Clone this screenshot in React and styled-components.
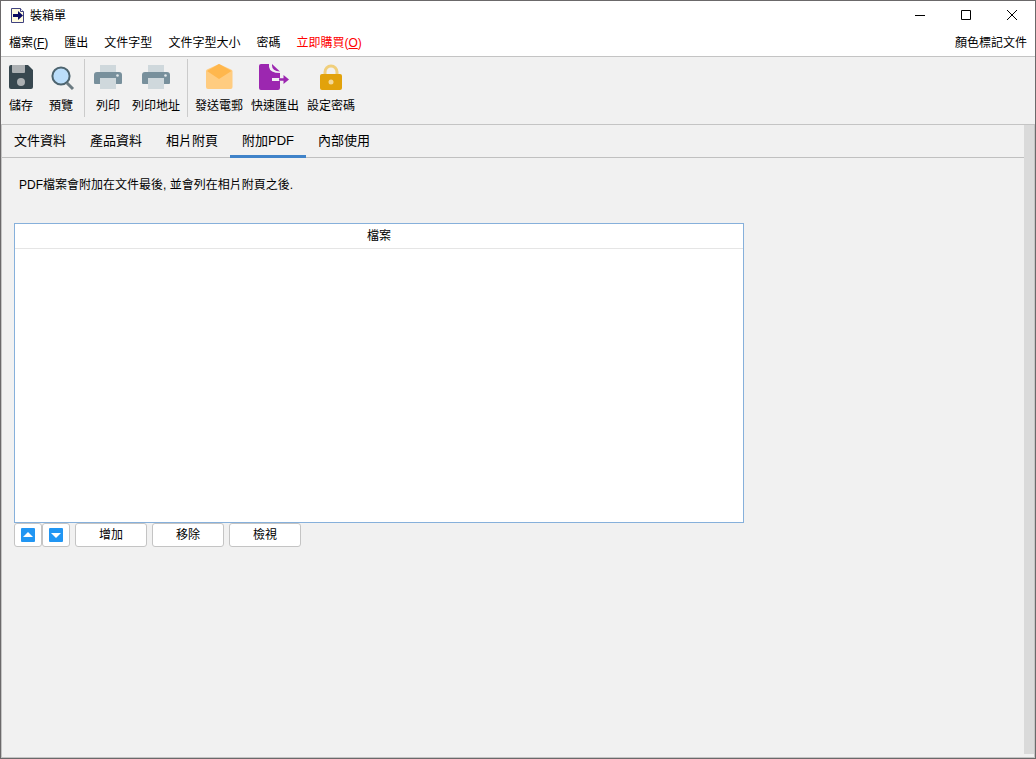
import React, { useState } from 'react';
import styled, { createGlobalStyle } from 'styled-components';

const GlobalStyle = createGlobalStyle`
  * {
    box-sizing: border-box;
  }
  html, body, #root {
    height: 100%;
    margin: 0;
  }
  body, button, table {
    font-family: "Liberation Sans", "Noto Sans CJK TC", sans-serif;
    font-size: 12px;
    line-height: 16px;
    color: #000;
  }
`;

const Window = styled.div`
  display: flex;
  flex-direction: column;
  min-height: 100%;
  border: 1px solid #6b696a;
  background: #f1f1f1;
`;

const TitleBar = styled.header`
  display: flex;
  align-items: center;
  height: 29px;
  padding-left: 10px;
  gap: 5px;
  background: #fff;
`;

const Title = styled.h1`
  flex: 1;
  margin: 0;
  font-size: 12px;
  font-weight: 400;
`;

const WindowControls = styled.div`
  display: flex;
`;

const WindowButton = styled.button`
  display: flex;
  align-items: center;
  justify-content: center;
  width: 46px;
  height: 28px;
  padding: 0;
  border: 0;
  background: transparent;
`;

const MenuBar = styled.nav`
  display: flex;
  align-items: center;
  height: 27px;
  border-bottom: 1px solid #c4c4c4;
  background: #fff;
`;

const MenuItem = styled.button`
  padding: 0 8px;
  border: 0;
  background: transparent;
  white-space: nowrap;
  color: ${({ $accent }) => ($accent ? '#f00' : '#000')};
  margin-left: ${({ $right }) => ($right ? 'auto' : '0')};
`;

const ToolBar = styled.div`
  display: flex;
  height: 68px;
  padding: 2px 0 7px;
  border-bottom: 1px solid #c4c4c4;
`;

const ToolButton = styled.button`
  display: flex;
  flex-direction: column;
  align-items: center;
  gap: 5px;
  min-width: 40px;
  padding: 2px 4px 0;
  border: 0;
  background: transparent;
  white-space: nowrap;
`;

const Separator = styled.span`
  width: 1px;
  margin: 0 3px;
  background: #cbcbcb;
`;

const Workspace = styled.main`
  display: flex;
  flex: 1;
  border: solid #c4c4c4;
  border-width: 0 1px 1px;
`;

const Content = styled.div`
  flex: 1;
  min-width: 0;
`;

const ScrollTrack = styled.div`
  width: 10px;
  margin-bottom: 3px;
  background: #dadada;
`;

const TabList = styled.div`
  display: flex;
  height: 33px;
  border-bottom: 1px solid #c0c0c0;
`;

const Tab = styled.button`
  height: 33px;
  padding: 2px 12px 0;
  border: 0;
  border-bottom: 3px solid ${({ $active }) => ($active ? '#4083c9' : 'transparent')};
  background: transparent;
  font-size: 13px;
  white-space: nowrap;
`;

const Panel = styled.section`
  padding: 19px 12px;
`;

const Hint = styled.p`
  margin: 0 5px 30px;
`;

const FileList = styled.div`
  width: 100%;
  max-width: 730px;
  height: 300px;
  border: 1px solid #86b0db;
  background: #fff;
`;

const FileTable = styled.table`
  width: 100%;
  border-spacing: 0;

  th {
    height: 25px;
    padding: 0;
    border-bottom: 1px solid #e5e5e5;
    font-weight: 400;
    text-align: center;
  }
`;

const Actions = styled.div`
  display: flex;
  gap: 5px;
`;

const OrderButtons = styled.div`
  display: flex;
`;

const ActionButton = styled.button`
  display: flex;
  align-items: center;
  justify-content: center;
  width: ${({ $icon }) => ($icon ? '28px' : '72px')};
  height: 24px;
  padding: 0;
  border: 1px solid #c4c4c4;
  border-radius: 3px;
  background: #fff;
`;

const AppIcon = () => (
  <svg width="14" height="15" viewBox="0 0 14 15" aria-hidden="true">
    <path d="M.5.5h9l3 3v11H.5z" fill="#fffbe0" stroke="#3f4280" />
    <path d="M9.500.5v3h3" fill="#fff" stroke="#3f4280" />
    <path d="M2 6h5V3l5 4.500L7 12V9H2z" fill="#0a0a62" />
  </svg>
);

const SaveIcon = () => (
  <svg width="28" height="32" viewBox="0 0 28 32" aria-hidden="true">
    <path d="M4 4h17l5 5v17a2 2 0 0 1-2 2H4a2 2 0 0 1-2-2V6a2 2 0 0 1 2-2z" fill="#37474f" />
    <path d="M5 4h13v7a1 1 0 0 1-1 1H6a1 1 0 0 1-1-1z" fill="#acb0b3" />
    <circle cx="14" cy="21" r="4" fill="#acb0b3" />
  </svg>
);

const PreviewIcon = () => (
  <svg width="32" height="32" viewBox="0 0 32 32" aria-hidden="true">
    <path d="M22 22l6 6" stroke="#6b7a81" strokeWidth="3" />
    <circle cx="16" cy="15" r="8.600" fill="#bbdefb" stroke="#4d646f" strokeWidth="2" />
  </svg>
);

const PrinterIcon = () => (
  <svg width="28" height="32" viewBox="0 0 28 32" aria-hidden="true">
    <path d="M6 4h16v8H6z" fill="#cfd8dc" />
    <path d="M3 11h22a3 3 0 0 1 3 3v8a1 1 0 0 1-1 1H1a1 1 0 0 1-1-1v-8a3 3 0 0 1 3-3z" fill="#78909c" />
    <path d="M6 17h16v11H6z" fill="#cfd8dc" />
    <circle cx="23.500" cy="14.500" r="1.300" fill="#e3e9ec" />
  </svg>
);

const MailIcon = () => (
  <svg width="28" height="32" viewBox="0 0 28 32" aria-hidden="true">
    <path d="M1 10q0-1 1-1.500L14 3l12 5.500q1.500.5 1.500 1.500v16a2 2 0 0 1-2 2H3a2 2 0 0 1-2-2z" fill="#ffcc80" />
    <path d="M14 3l12.500 7L14 18 2 10z" fill="#ffb74d" />
  </svg>
);

const ExportIcon = () => (
  <svg width="32" height="32" viewBox="0 0 32 32" aria-hidden="true">
    <path d="M2 3h8v3q1 6 11 6v5h-8v3h8v7a2 2 0 0 1-2 2H2a2 2 0 0 1-2-2V5a2 2 0 0 1 2-2z" fill="#9c27b0" />
    <path d="M13 3l8 7.500q-8-.5-8-6z" fill="#9c27b0" />
    <path d="M20 17.200h4.500V14l5.500 4.500-5.500 4.500v-3.200H20z" fill="#9c27b0" />
  </svg>
);

const LockIcon = () => (
  <svg width="28" height="32" viewBox="0 0 28 32" aria-hidden="true">
    <path d="M8 14v-3a6 6 0 0 1 12 0v3" fill="none" stroke="#f0cf7c" strokeWidth="3" />
    <rect x="3" y="13" width="22" height="16" rx="2" fill="#e2a20b" />
    <circle cx="14" cy="21" r="2.500" fill="#f3d999" />
  </svg>
);

const ArrowIcon = ({ up }) => (
  <svg width="14" height="14" viewBox="0 0 14 14" aria-hidden="true">
    <rect width="14" height="14" rx="1" fill="#2196f3" />
    <path d={up ? 'M2 9l5-5 5 5z' : 'M2 5l5 5 5-5z'} fill="#fff" />
  </svg>
);

const tools = [
  [
    { label: '儲存', Icon: SaveIcon },
    { label: '預覽', Icon: PreviewIcon },
  ],
  [
    { label: '列印', Icon: PrinterIcon },
    { label: '列印地址', Icon: PrinterIcon },
  ],
  [
    { label: '發送電郵', Icon: MailIcon },
    { label: '快速匯出', Icon: ExportIcon },
    { label: '設定密碼', Icon: LockIcon },
  ],
];

const tabs = ['文件資料', '產品資料', '相片附頁', '附加PDF', '內部使用'];

const App = () => {
  const [activeTab, setActiveTab] = useState('附加PDF');

  return (
    <Window>
      <GlobalStyle />
      <TitleBar>
        <AppIcon />
        <Title>裝箱單</Title>
        <WindowControls>
          <WindowButton aria-label="最小化">
            <svg width="11" height="11"><path d="M0 5.500h10" stroke="#000" /></svg>
          </WindowButton>
          <WindowButton aria-label="最大化">
            <svg width="11" height="11"><path d="M.5.5h9v9h-9z" fill="none" stroke="#000" /></svg>
          </WindowButton>
          <WindowButton aria-label="關閉">
            <svg width="11" height="11"><path d="M0 0l10 10M10 0L0 10" stroke="#000" /></svg>
          </WindowButton>
        </WindowControls>
      </TitleBar>
      <MenuBar>
        <MenuItem>檔案(<u>F</u>)</MenuItem>
        <MenuItem>匯出</MenuItem>
        <MenuItem>文件字型</MenuItem>
        <MenuItem>文件字型大小</MenuItem>
        <MenuItem>密碼</MenuItem>
        <MenuItem $accent>立即購買(<u>O</u>)</MenuItem>
        <MenuItem $right>顏色標記文件</MenuItem>
      </MenuBar>
      <ToolBar>
        {tools.map((group, index) => (
          <React.Fragment key={index}>
            {index > 0 && <Separator />}
            {group.map(({ label, Icon }) => (
              <ToolButton key={label}>
                <Icon />
                {label}
              </ToolButton>
            ))}
          </React.Fragment>
        ))}
      </ToolBar>
      <Workspace>
        <Content>
          <TabList role="tablist">
            {tabs.map((tab) => (
              <Tab
                key={tab}
                role="tab"
                aria-selected={tab === activeTab}
                $active={tab === activeTab}
                onClick={() => setActiveTab(tab)}
              >
                {tab}
              </Tab>
            ))}
          </TabList>
          <Panel>
            <Hint>PDF檔案會附加在文件最後, 並會列在相片附頁之後.</Hint>
            <FileList>
              <FileTable>
                <thead>
                  <tr>
                    <th scope="col">檔案</th>
                  </tr>
                </thead>
                <tbody />
              </FileTable>
            </FileList>
            <Actions>
              <OrderButtons>
                <ActionButton $icon aria-label="上移"><ArrowIcon up /></ActionButton>
                <ActionButton $icon aria-label="下移"><ArrowIcon /></ActionButton>
              </OrderButtons>
              <ActionButton>增加</ActionButton>
              <ActionButton>移除</ActionButton>
              <ActionButton>檢視</ActionButton>
            </Actions>
          </Panel>
        </Content>
        <ScrollTrack />
      </Workspace>
    </Window>
  );
};

export default App;
